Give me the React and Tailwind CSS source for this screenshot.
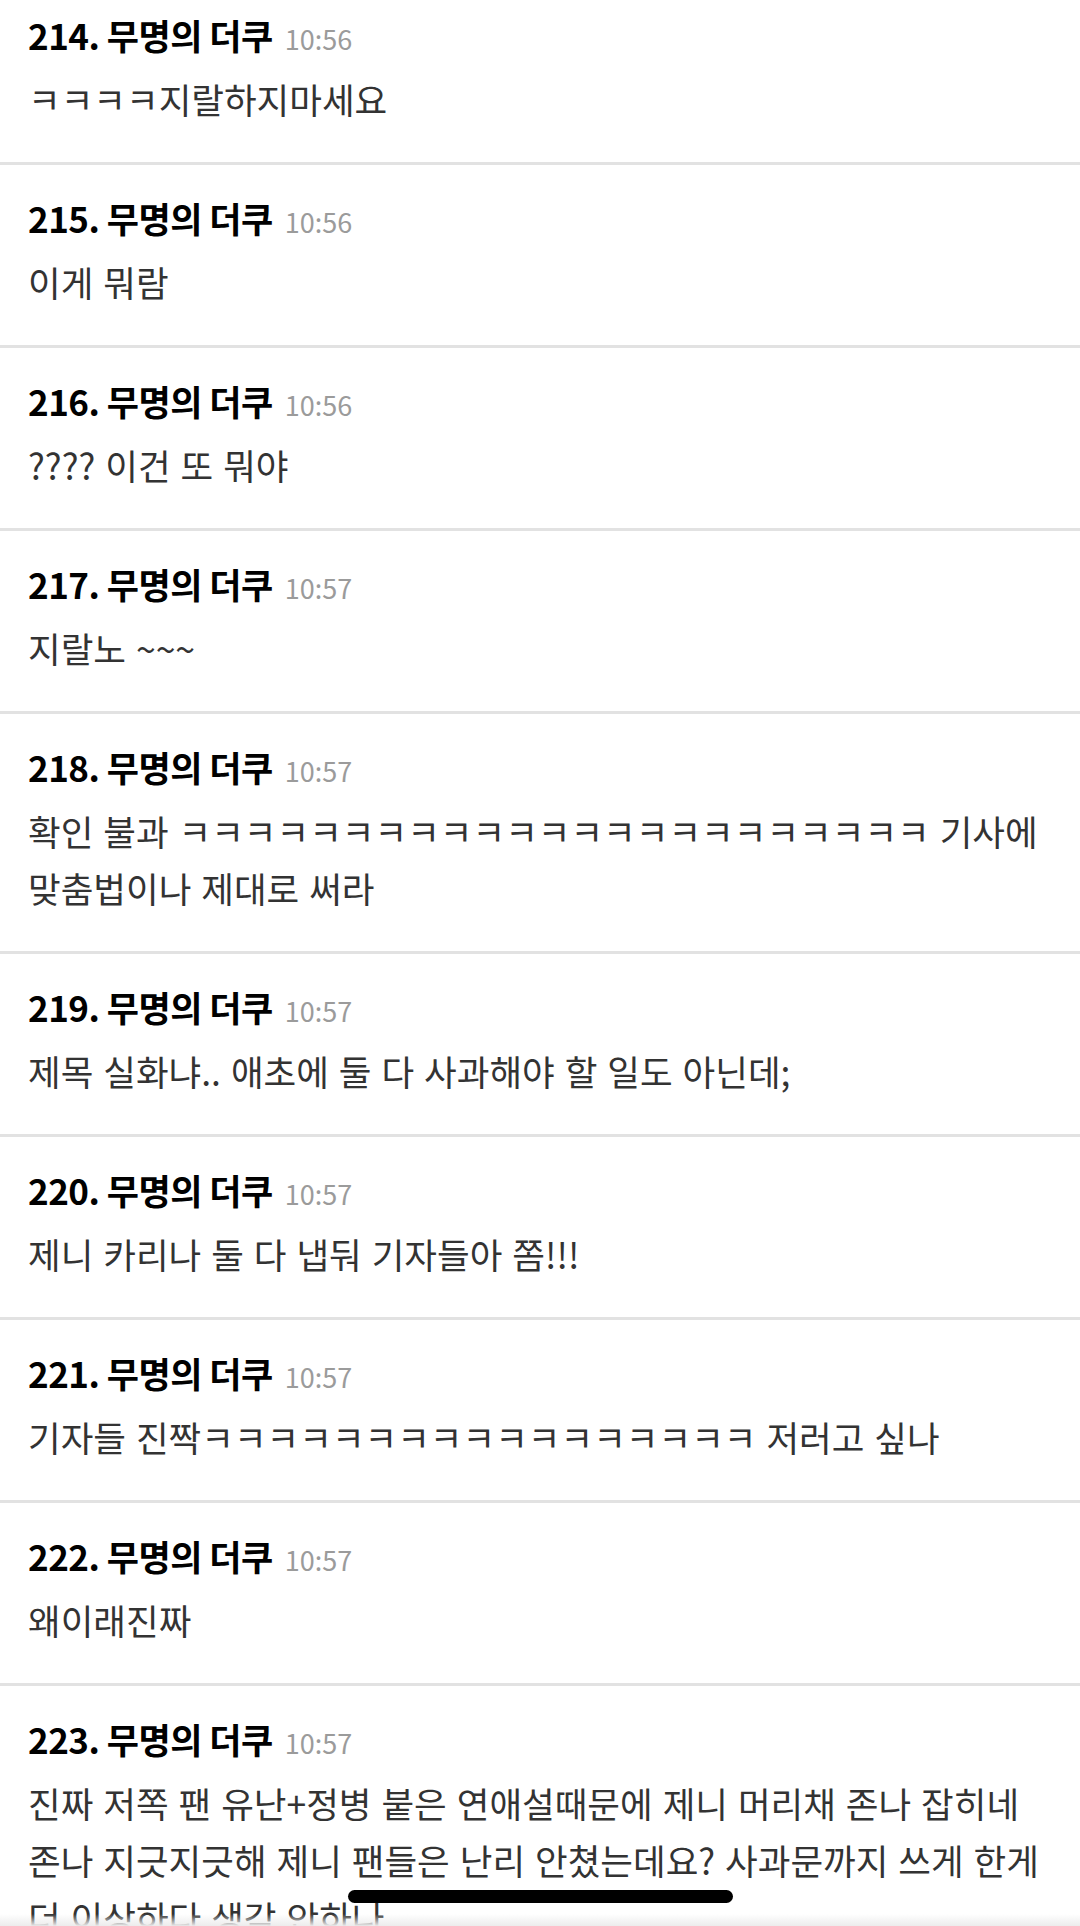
import React from 'react'

const comments = [
  { no: 214, time: '10:56', lines: ['ㅋㅋㅋㅋ지랄하지마세요'] },
  { no: 215, time: '10:56', lines: ['이게 뭐람'] },
  { no: 216, time: '10:56', lines: ['???? 이건 또 뭐야'] },
  { no: 217, time: '10:57', lines: ['지랄노 ~~~'] },
  { no: 218, time: '10:57', lines: ['확인 불과 ㅋㅋㅋㅋㅋㅋㅋㅋㅋㅋㅋㅋㅋㅋㅋㅋㅋㅋㅋㅋㅋㅋㅋ 기사에', '맞춤법이나 제대로 써라'] },
  { no: 219, time: '10:57', lines: ['제목 실화냐.. 애초에 둘 다 사과해야 할 일도 아닌데;'] },
  { no: 220, time: '10:57', lines: ['제니 카리나 둘 다 냅둬 기자들아 쫌!!!'] },
  { no: 221, time: '10:57', lines: ['기자들 진짝ㅋㅋㅋㅋㅋㅋㅋㅋㅋㅋㅋㅋㅋㅋㅋㅋㅋ 저러고 싶나'] },
  { no: 222, time: '10:57', lines: ['왜이래진짜'] },
  {
    no: 223,
    time: '10:57',
    lines: [
      '진짜 저쪽 팬 유난+정병 붙은 연애설때문에 제니 머리채 존나 잡히네',
      '존나 지긋지긋해 제니 팬들은 난리 안쳤는데요? 사과문까지 쓰게 한게',
      '더 이상하다 생각 안하나',
    ],
  },
]

function Comment({ no, time, lines }) {
  return (
    <div className="pt-[33px] pb-[35px] pl-[28px] pr-[10px] border-b-[3px] border-[#e2e2e2]">
      {/* 번호 + 닉네임 + 시간 */}
      <div className="h-[40px] leading-[40px] whitespace-nowrap">
        <span className="text-[35px] font-bold text-black tracking-[-0.5px]">{no}. 무명의 더쿠</span>
        <span className="ml-[12px] text-[27px] text-[#9b9b9b]">{time}</span>
      </div>
      <div className="mt-[15px] text-[35.5px] leading-[57px] text-[#333333] whitespace-nowrap [word-spacing:2px]">
        {lines.map((line, i) => (
          <div key={i}>{line}</div>
        ))}
      </div>
    </div>
  )
}

export default function App() {
  return (
    <div
      className="relative w-[1080px] h-[1926px] overflow-hidden bg-white"
      style={{ fontFamily: '"Noto Sans CJK KR", "Noto Sans", sans-serif' }}
    >
      <div className="-mt-[18px]">
        {comments.map(c => (
          <Comment key={c.no} {...c} />
        ))}
      </div>

      {/* 하단 그림자 */}
      <div className="absolute left-0 right-0 bottom-0 h-[12px] bg-gradient-to-b from-transparent to-[#ececec]" />
      {/* 홈 인디케이터 */}
      <div className="absolute left-[348px] bottom-[23px] w-[385px] h-[13px] rounded-full bg-black" />
    </div>
  )
}
